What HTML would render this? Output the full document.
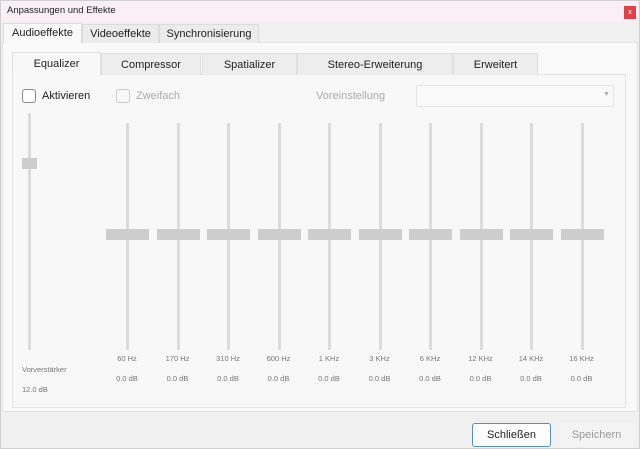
<!DOCTYPE html>
<html><head><meta charset="utf-8"><style>
*{margin:0;padding:0;box-sizing:border-box}
body{width:640px;height:449px;overflow:hidden;background:#f0f0f0;font-family:"Liberation Sans",sans-serif;position:relative;color:#222}
.a{position:absolute}
.title{left:0;top:0;width:640px;height:22px;background:#f9eff4;border:1px solid #cfcfcf;border-bottom:none}
.tab{height:19px;font-size:11px;text-align:center;line-height:19px;border:1px solid #dcdcdc;border-bottom:none;background:#ececec}
.st{height:22px;font-size:11px;text-align:center;line-height:22px;border:1px solid #e0e0e0;border-bottom:none;background:#ededed}
.track{width:3px;background:#dcdcdc}
.h{height:11px;background:#cdcdcd}
.lbl{font-size:7.5px;color:#777;width:50px;text-align:center}
</style></head><body>
<div class="a title"></div>
<div class="a" style="left:7px;top:5px;font-size:9.5px;color:#222">Anpassungen und Effekte</div>
<div class="a" style="left:624px;top:6px;width:12px;height:13px;background:#d9454b;color:#fff;font-size:7px;text-align:center;line-height:13px">x</div>
<div class="a" style="left:0;top:22px;width:640px;height:427px;border:1px solid #cfcfcf;border-top:none"></div>
<div class="a" style="left:2px;top:42px;width:636px;height:370px;background:#f9f9f9;border:1px solid #e2e2e2"></div>
<div class="a tab" style="left:3px;top:23px;width:79px;background:#f9f9f9;height:20px">Audioeffekte</div>
<div class="a tab" style="left:82px;top:24px;width:77px">Videoeffekte</div>
<div class="a tab" style="left:159px;top:24px;width:100px">Synchronisierung</div>
<div class="a" style="left:12px;top:74px;width:614px;height:334px;background:#f8f8f8;border:1px solid #e3e3e3"></div>
<div class="a st" style="left:12px;top:52px;width:89px;background:#f8f8f8;height:23px">Equalizer</div>
<div class="a st" style="left:101px;top:53px;width:100px">Compressor</div>
<div class="a st" style="left:202px;top:53px;width:95px">Spatializer</div>
<div class="a st" style="left:297px;top:53px;width:156px">Stereo-Erweiterung</div>
<div class="a st" style="left:453px;top:53px;width:85px">Erweitert</div>
<div class="a" style="left:22px;top:89px;width:14px;height:14px;border:1px solid #888;border-radius:3px;background:#fff"></div>
<div class="a" style="left:42px;top:90px;font-size:11px">Aktivieren</div>
<div class="a" style="left:116px;top:89px;width:14px;height:14px;border:1px solid #ccc;border-radius:3px"></div>
<div class="a" style="left:136px;top:90px;font-size:11px;color:#aaa">Zweifach</div>
<div class="a" style="left:316px;top:90px;font-size:11px;color:#aaa">Voreinstellung</div>
<div class="a" style="left:416px;top:85px;width:198px;height:22px;border:1px solid #e6e6e6;border-radius:2px;background:#f9f9f9"></div>
<div class="a" style="left:603px;top:91px;font-size:7px;color:#aaa">▼</div>
<div class="a track" style="left:28px;top:113px;height:237px"></div>
<div class="a h" style="left:22px;top:158px;width:15px"></div>
<div class="a" style="left:22px;top:365px;font-size:7.5px;color:#777">Vorverstärker</div>
<div class="a" style="left:22px;top:385px;font-size:7.5px;color:#777">12.0 dB</div>
<div id="eq"></div>
<script>
var f=["60 Hz","170 Hz","310 Hz","600 Hz","1 KHz","3 KHz","6 KHz","12 KHz","14 KHz","16 KHz"],s="";
for(var i=0;i<10;i++){var x=127+i*50.5;
s+='<div class="a track" style="left:'+(x-1)+'px;top:123px;height:227px"></div>';
s+='<div class="a h" style="left:'+(x-21)+'px;top:229px;width:43px"></div>';
s+='<div class="a lbl" style="left:'+(x-25)+'px;top:354px">'+f[i]+'</div>';
s+='<div class="a lbl" style="left:'+(x-25)+'px;top:374px">0.0 dB</div>';}
document.getElementById('eq').innerHTML=s;
</script>
<div class="a" style="left:472px;top:423px;width:79px;height:24px;border:1px solid #5a8fb8;border-radius:3px;background:#fdfdfd;font-size:11px;text-align:center;line-height:22px">Schließen</div>
<div class="a" style="left:560px;top:423px;width:73px;height:24px;background:#f4f4f4;font-size:11px;text-align:center;line-height:24px;color:#999">Speichern</div>
</body></html>
